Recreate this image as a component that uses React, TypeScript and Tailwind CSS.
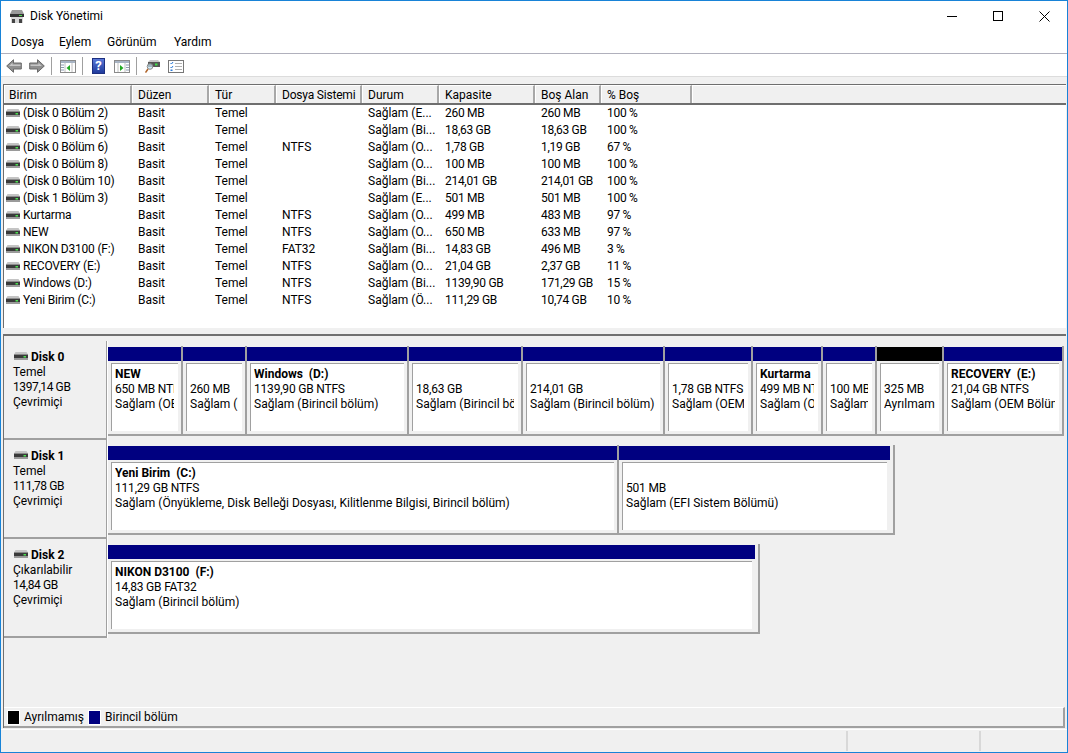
import React from "react";

const font = "font-['Roboto','Liberation_Sans',sans-serif]";

function DiskIcon({ className = "" }: { className?: string }) {
  return (
    <svg width="14" height="9" viewBox="0 0 14 9" className={className}>
      <path d="M1.5 0h11L14 2.5H0z" fill="#c4c4c4" />
      <rect x="0" y="2.5" width="14" height="4" fill="#3a3a3a" />
      <rect x="0" y="6.5" width="14" height="1.5" fill="#9a9a9a" />
      <rect x="9.5" y="4" width="2.5" height="1.5" fill="#4be04f" />
    </svg>
  );
}

const rows = [
  ["(Disk 0 Bölüm 2)", "Basit", "Temel", "", "Sağlam (E...", "260 MB", "260 MB", "100 %"],
  ["(Disk 0 Bölüm 5)", "Basit", "Temel", "", "Sağlam (Bi...", "18,63 GB", "18,63 GB", "100 %"],
  ["(Disk 0 Bölüm 6)", "Basit", "Temel", "NTFS", "Sağlam (O...", "1,78 GB", "1,19 GB", "67 %"],
  ["(Disk 0 Bölüm 8)", "Basit", "Temel", "", "Sağlam (O...", "100 MB", "100 MB", "100 %"],
  ["(Disk 0 Bölüm 10)", "Basit", "Temel", "", "Sağlam (Bi...", "214,01 GB", "214,01 GB", "100 %"],
  ["(Disk 1 Bölüm 3)", "Basit", "Temel", "", "Sağlam (E...", "501 MB", "501 MB", "100 %"],
  ["Kurtarma", "Basit", "Temel", "NTFS", "Sağlam (O...", "499 MB", "483 MB", "97 %"],
  ["NEW", "Basit", "Temel", "NTFS", "Sağlam (O...", "650 MB", "633 MB", "97 %"],
  ["NIKON D3100 (F:)", "Basit", "Temel", "FAT32", "Sağlam (Bi...", "14,83 GB", "496 MB", "3 %"],
  ["RECOVERY (E:)", "Basit", "Temel", "NTFS", "Sağlam (O...", "21,04 GB", "2,37 GB", "11 %"],
  ["Windows (D:)", "Basit", "Temel", "NTFS", "Sağlam (Bi...", "1139,90 GB", "171,29 GB", "15 %"],
  ["Yeni Birim (C:)", "Basit", "Temel", "NTFS", "Sağlam (Ö...", "111,29 GB", "10,74 GB", "10 %"],
];

const cols = [
  { t: "Birim", w: "w-[128px]" },
  { t: "Düzen", w: "w-[77px]" },
  { t: "Tür", w: "w-[67px]" },
  { t: "Dosya Sistemi", w: "w-[86px] tracking-[-0.2px]" },
  { t: "Durum", w: "w-[77px]" },
  { t: "Kapasite", w: "w-[96px]" },
  { t: "Boş Alan", w: "w-[66px]" },
  { t: "% Boş", w: "w-[91px]" },
];

const cellW = ["w-[77px]", "w-[67px]", "w-[86px]", "w-[77px]", "w-[96px] tracking-[-0.3px]", "w-[66px] tracking-[-0.3px]", "w-[91px] tracking-[-0.3px]"];

type Part = { w: string; name?: string; size: string; status: string; black?: boolean; end?: boolean };

const disk0: Part[] = [
  { w: "w-[75px]", name: "NEW", size: "650 MB NTFS", status: "Sağlam (OEM Bölümü)" },
  { w: "w-[64px]", size: "260 MB", status: "Sağlam (EFI Sistem Bölümü)" },
  { w: "w-[162px]", name: "Windows  (D:)", size: "1139,90 GB NTFS", status: "Sağlam (Birincil bölüm)" },
  { w: "w-[114px]", size: "18,63 GB", status: "Sağlam (Birincil bölüm)" },
  { w: "w-[142px]", size: "214,01 GB", status: "Sağlam (Birincil bölüm)" },
  { w: "w-[88px]", size: "1,78 GB NTFS", status: "Sağlam (OEM Bölümü)" },
  { w: "w-[70px]", name: "Kurtarma", size: "499 MB NTFS", status: "Sağlam (OEM Bölümü)" },
  { w: "w-[54px]", size: "100 MB", status: "Sağlam (EFI Sistem)" },
  { w: "w-[67px]", size: "325 MB", status: "Ayrılmamış", black: true },
  { w: "w-[120px]", name: "RECOVERY  (E:)", size: "21,04 GB NTFS", status: "Sağlam (OEM Bölümü)" },
];
const disk1: Part[] = [
  { w: "w-[511px]", name: "Yeni Birim  (C:)", size: "111,29 GB NTFS", status: "Sağlam (Önyükleme, Disk Belleği Dosyası, Kilitlenme Bilgisi, Birincil bölüm)" },
  { w: "w-[276px]", size: "501 MB", status: "Sağlam (EFI Sistem Bölümü)", end: true },
];
const disk2: Part[] = [
  { w: "w-[652px]", name: "NIKON D3100  (F:)", size: "14,83 GB FAT32", status: "Sağlam (Birincil bölüm)", end: true },
];

function Partition({ p }: { p: Part }) {
  return (
    <div className={`${p.w} shrink-0 h-[90px] border-r-2 border-b-2 border-[#a0a0a0] flex flex-col pt-px`}>
      <div className={`h-[14px] shrink-0 ${p.end ? "mr-[3px]" : ""} ${p.black ? "bg-black" : "bg-[#000080]"}`} />
      <div className={`flex-1 min-h-0 pl-[3px] pt-[2px] pb-[3px] ${p.end ? "pr-[6px]" : "pr-[3px]"} flex`}>
        <div className="flex-1 min-w-0 border-l border-t border-[#a0a0a0] bg-white pl-[3px] pr-[4px] pt-[3px]">
          <div className="overflow-hidden">
            <div className="h-[15px] font-bold whitespace-pre">{p.name ?? ""}</div>
            <div className="h-[15px] whitespace-nowrap tracking-[-0.2px]">{p.size}</div>
            <div className="h-[15px] whitespace-nowrap">{p.status}</div>
          </div>
        </div>
      </div>
    </div>
  );
}

function DiskRow({ name, type, size, parts }: { name: string; type: string; size: string; parts: Part[] }) {
  return (
    <div className="flex items-stretch h-[99px]">
      <div className="w-[103px] shrink-0 border-r border-b-2 border-[#a0a0a0] pl-[9px] pt-[9px] leading-[15px]">
        <div className="flex items-center h-[15px] ml-px">
          <DiskIcon className="mr-[3px] -mt-[2px] shrink-0" />
          <span className="font-bold">{name}</span>
        </div>
        <div>{type}</div>
        <div className="tracking-[-0.4px]">{size}</div>
        <div>Çevrimiçi</div>
      </div>
      <div className="flex border-l border-white pt-[6px]">
        <div className="flex items-start -mt-px">
          {parts.map((p, i) => (
            <Partition key={i} p={p} />
          ))}
        </div>
      </div>
    </div>
  );
}

function Arrow({ flip, className = "" }: { flip?: boolean; className?: string }) {
  return (
    <svg width="16" height="14" viewBox="0 0 16 14" className={className}>
      <g transform={flip ? "matrix(-1 0 0 1 16 0)" : undefined}>
        <path d="M.7 7 7.5.7v3.3h7.8v6H7.5v3.3z" fill="#8f8f8f" stroke="#6a6a6a" />
        <path d="M3 7l3.5-3.2V5.500h8V7z" fill="#c6c6c6" />
      </g>
    </svg>
  );
}

function Win({ right }: { right?: boolean }) {
  return (
    <svg width="16" height="13" viewBox="0 0 16 13">
      <rect x=".5" y=".5" width="15" height="12" fill="#fff" stroke="#8a8a8a" />
      <rect x="1" y="1" width="14" height="2" fill="#a8b4c4" />
      {right ? (
        <>
          <path d="M12 5h3M12 7.500h3M12 10h3" stroke="#8a9ab0" />
          <path d="M4 3v9M11 3v9" stroke="#c0c0c0" />
          <path d="M6 5v6l3.500-3z" fill="#22a822" />
        </>
      ) : (
        <>
          <path d="M1 5h3M1 7.500h3M1 10h3" stroke="#8a9ab0" />
          <path d="M5 3v9M12 3v9" stroke="#c0c0c0" />
          <path d="M10 5v6L6.500 8z" fill="#22a822" />
        </>
      )}
    </svg>
  );
}

function ToolIcons() {
  return (
    <div className="h-[22px] flex items-center pl-[5px] pt-[2px]">
      <Arrow />
      <Arrow flip className="ml-[7px]" />
      <div className="w-px h-[18px] bg-[#a0a0a0] ml-[6px]" />
      <div className="ml-[8px]"><Win /></div>
      <div className="w-px h-[18px] bg-[#a0a0a0] ml-[6px]" />
      <div className="ml-[9px] w-[13px] h-[16px] bg-gradient-to-b from-[#5a78d8] to-[#203a9c] border border-[#1c2f80] text-white font-bold text-[13px] leading-[14px] text-center">?</div>
      <div className="ml-[9px]"><Win right /></div>
      <div className="w-px h-[18px] bg-[#a0a0a0] ml-[6px]" />
      <svg width="15" height="14" viewBox="0 0 15 14" className="ml-[8px]">
        <path d="M3 3h12v5H3z" fill="#555" />
        <path d="M3 3l2-2h8l2 2z" fill="#c8c8c8" />
        <rect x="10" y="4.500" width="2.500" height="2" fill="#3fe04a" />
        <circle cx="5" cy="7.500" r="2.800" fill="#bfe0f0" fillOpacity=".7" stroke="#8a8a8a" />
        <path d="M3 10 .5 13.500" stroke="#b0642a" strokeWidth="1.500" />
      </svg>
      <svg width="16" height="13" viewBox="0 0 16 13" className="ml-[8px]">
        <rect x=".5" y=".5" width="15" height="12" fill="#fff" stroke="#777" />
        <path d="M2.500 3l1 1 1.500-2M2.500 7l1 1 1.500-2" stroke="#2a7ad8" fill="none" />
        <rect x="2.500" y="9.500" width="2" height="1.500" fill="#2a7ad8" />
        <path d="M7 3.500h7M7 6.500h7M7 9.500h7" stroke="#b0b0b0" />
      </svg>
    </div>
  );
}

export default function App() {
  return (
    <div className={`${font} w-[1068px] h-[753px] border border-[#1883d7] bg-[#f0f0f0] text-[12px] leading-[17px] text-black flex flex-col overflow-hidden`}>
      {/* title bar */}
      <div className="h-[30px] bg-white flex items-center shrink-0">
        <svg width="16" height="15" viewBox="0 0 16 15" className="ml-[8px]">
          <path d="M3 1h10l2 4H1z" fill="#9a9a9a" />
          <rect x="1" y="5" width="14" height="3" fill="#333" />
          <rect x="10" y="6" width="3" height="1" fill="#4fdc4f" />
          <rect x="2" y="8" width="12" height="6" fill="#d8d8d8" />
          <rect x="3" y="10" width="3" height="4" fill="#444" />
          <rect x="10" y="10" width="3" height="4" fill="#444" />
        </svg>
        <span className="ml-[5px]">Disk Yönetimi</span>
        <div className="ml-auto flex items-center h-full">
          <div className="w-[46px] flex justify-center"><svg width="10" height="10" viewBox="0 0 10 10"><path d="M0 5.500h10" stroke="#000" /></svg></div>
          <div className="w-[46px] flex justify-center"><svg width="10" height="10" viewBox="0 0 10 10"><rect x=".5" y=".5" width="9" height="9" fill="none" stroke="#000" /></svg></div>
          <div className="w-[46px] flex justify-center"><svg width="11" height="11" viewBox="0 0 11 11"><path d="M.5.5l10 10M10.500.5l-10 10" stroke="#000" /></svg></div>
        </div>
      </div>
      {/* menu */}
      <div className="h-[23px] bg-white border-b border-[#b0b0bc] flex items-center pl-[10px] shrink-0">
        <span className="w-[48px]">Dosya</span>
        <span className="w-[48px]">Eylem</span>
        <span className="w-[67px]">Görünüm</span>
        <span>Yardım</span>
      </div>
      {/* toolbar */}
      <div className="h-[22px] bg-white shrink-0"><ToolIcons /></div>
      <div className="h-[8px] border-t border-[#dcdcdc] shrink-0" />
      {/* list */}
      <div className="ml-[2px] mr-[1px] h-[244px] border-t border-l border-[#6e6e6e] bg-white shrink-0 overflow-hidden">
        <div className="h-[20px] flex bg-[#f0f0f0] border-b-2 border-[#6e6e6e]">
          {cols.map((c, i) => (
            <div key={c.t} className={`${c.w} shrink-0 h-[18px] border-r-2 border-r-[#a8a8a8] border-l border-l-white border-t border-t-white ${i === 0 ? "pl-[4px]" : "pl-[5px]"} leading-[18px] whitespace-nowrap`}>{c.t}</div>
          ))}
          <div className="flex-1 border-t border-t-white border-l border-l-white" />
        </div>
        <div>
          {rows.map((r, i) => (
            <div key={i} className="h-[17px] flex leading-[17px]">
              <div className="w-[128px] shrink-0 flex items-center pl-[2px]">
                <DiskIcon className="mr-[3px] shrink-0" />
                <span className="whitespace-nowrap tracking-[-0.2px]">{r[0]}</span>
              </div>
              {r.slice(1).map((v, j) => (
                <div key={j} className={`${cellW[j]} shrink-0 pl-[6px] whitespace-nowrap`}>{v}</div>
              ))}
            </div>
          ))}
        </div>
      </div>
      <div className="h-[6px] shrink-0" />
      {/* graph */}
      <div className="ml-[2px] mr-[1px] flex-1 border-t-2 border-l border-[#707070] flex flex-col leading-[15px] min-h-0">
        <div className="pt-[5px] flex-1">
          <DiskRow name="Disk 0" type="Temel" size="1397,14 GB" parts={disk0} />
          <DiskRow name="Disk 1" type="Temel" size="111,78 GB" parts={disk1} />
          <DiskRow name="Disk 2" type="Çıkarılabilir" size="14,84 GB" parts={disk2} />
        </div>
        <div className="h-[21px] shrink-0 border-t border-t-white border-b-2 border-b-[#a0a0a0] border-r-2 border-r-[#a0a0a0] flex items-center pl-[4px] mr-[1px]">
          <div className="w-[11px] h-[13px] bg-black outline outline-1 outline-white mr-[5px]" />
          <span className="w-[60px] whitespace-nowrap">Ayrılmamış</span>
          <div className="w-[11px] h-[13px] bg-[#000080] outline outline-1 outline-white ml-[5px] mr-[5px]" />
          <span>Birincil bölüm</span>
        </div>
      </div>
      {/* status */}
      <div className="h-[24px] shrink-0 pt-px">
        <div className="h-px bg-white" />
        <div className="flex justify-end pt-px h-[22px]">
          <div className="w-[133px] h-[20px] border-l-2 border-[#d8d8d8]" />
          <div className="w-[85px] h-[20px] border-l-2 border-[#d8d8d8]" />
          <div className="w-[3px]" />
        </div>
      </div>
    </div>
  );
}
